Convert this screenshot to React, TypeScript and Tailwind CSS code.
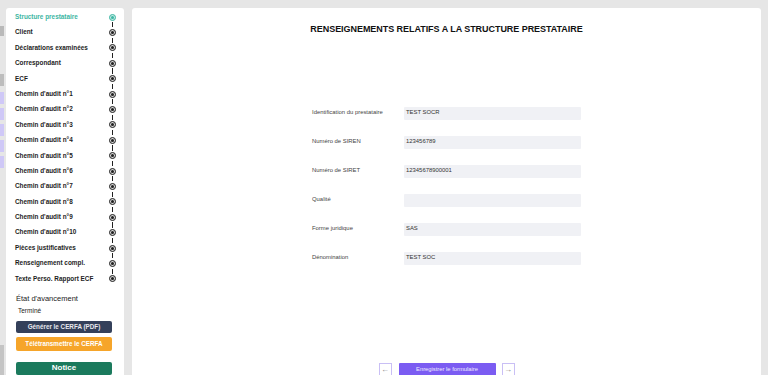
import React from "react";

const steps = [
  "Structure prestataire",
  "Client",
  "Déclarations examinées",
  "Correspondant",
  "ECF",
  "Chemin d'audit n°1",
  "Chemin d'audit n°2",
  "Chemin d'audit n°3",
  "Chemin d'audit n°4",
  "Chemin d'audit n°5",
  "Chemin d'audit n°6",
  "Chemin d'audit n°7",
  "Chemin d'audit n°8",
  "Chemin d'audit n°9",
  "Chemin d'audit n°10",
  "Pièces justificatives",
  "Renseignement compl.",
  "Texte Perso. Rapport ECF",
];

const fields = [
  { label: "Identification du prestataire", value: "TEST SOCR" },
  { label: "Numéro de SIREN", value: "123456789" },
  { label: "Numéro de SIRET", value: "12345678900001" },
  { label: "Qualité", value: "" },
  { label: "Forme juridique", value: "SAS" },
  { label: "Dénomination", value: "TEST SOC" },
];

function StepDot({ active }: { active: boolean }) {
  return (
    <div
      className={
        active
          ? "w-[7px] h-[7px] rounded-full border-[1.5px] border-[#3db6a3] bg-[#bfe9e1] flex items-center justify-center"
          : "w-[7px] h-[7px] rounded-full border-[1.5px] border-[#1f1f1f] bg-[#d4d4d4] flex items-center justify-center"
      }
    >
      <div className={active ? "w-[3px] h-[3px] rounded-full bg-[#3db6a3]" : "w-[3px] h-[3px] rounded-full bg-[#1f1f1f]"} />
    </div>
  );
}

export default function App() {
  return (
    <div className="w-full h-[375px] bg-[#e6e6e6] flex overflow-hidden font-['Liberation_Sans',Arial,sans-serif]">
      {/* left gutter (bits of page behind) */}
      <div className="w-[6px] flex flex-col">
        <div className="h-[26px]" />
        <div className="h-[10px] w-[4px] bg-[#b9b9b9]" />
        <div className="h-[38px]" />
        <div className="h-[12px] w-[4px] bg-[#bdbdbd]" />
        <div className="h-[6px]" />
        <div className="h-[12px] w-[4px] bg-[#cfc8f7]" />
        <div className="h-[4px]" />
        <div className="h-[12px] w-[4px] bg-[#cfc8f7]" />
        <div className="h-[4px]" />
        <div className="h-[12px] w-[4px] bg-[#cfc8f7]" />
        <div className="h-[4px]" />
        <div className="h-[12px] w-[4px] bg-[#cfc8f7]" />
        <div className="h-[4px]" />
        <div className="h-[12px] w-[4px] bg-[#cfc8f7]" />
        <div className="flex-1" />
        <div className="h-[30px] w-[4px] bg-[#c4c4c4]" />
      </div>

      {/* Sidebar */}
      <aside className="mt-[8px] w-[118px] bg-white rounded-t-[3px] flex flex-col">
        <nav className="flex flex-col pt-[1.5px] pl-[9px] pr-[8px]">
          {steps.map((s, i) => (
            <div key={s} className="h-[15.4px] flex items-stretch justify-between">
              <span
                className={
                  i === 0
                    ? "self-center text-[6.4px] leading-none font-bold text-[#3db6a3] whitespace-nowrap"
                    : "self-center text-[6.4px] leading-none font-bold text-[#1d1d1d] whitespace-nowrap"
                }
              >
                {s}
              </span>
              <div className="w-[7px] flex flex-col items-center">
                <div className="flex-1 flex items-start">
                  {i > 0 && <div className="w-px h-[2.6px] bg-[#222]" />}
                </div>
                <StepDot active={i === 0} />
                <div className="flex-1 flex items-end">
                  {i < steps.length - 1 && <div className="w-px h-[2.6px] bg-[#222]" />}
                </div>
              </div>
            </div>
          ))}
        </nav>

        <div className="pl-[10px] pr-[12px] mt-[7px] flex flex-col">
          <p className="text-[7.5px] leading-[10px] text-[#222]">État d'avancement</p>
          <p className="pl-[2px] mt-[2px] text-[6.5px] leading-[10px] text-[#222]">Terminé</p>
          <button className="mt-[5px] h-[12.5px] w-[96px] rounded-[2px] bg-[#34405a] text-[6.3px] leading-none text-[#e8e8ee] font-semibold">
            Générer le CERFA (PDF)
          </button>
          <button className="mt-[4px] h-[14px] w-[96px] rounded-[2px] bg-[#f6a52a] text-[6.3px] leading-none text-white font-semibold">
            Télétransmettre le CERFA
          </button>
          <button className="mt-[10.5px] h-[13px] w-[96px] rounded-[2px] bg-[#1b7a5d] text-[8px] leading-none text-white font-bold">
            Notice
          </button>
        </div>
      </aside>

      {/* Main card */}
      <main className="ml-[8px] mr-[7px] mt-[8px] flex-1 bg-white rounded-t-[3px] flex flex-col items-center">
        <h1 className="pt-[16px] text-[9px] leading-[10px] font-bold text-[#111] tracking-[-0.05px]">
          RENSEIGNEMENTS RELATIFS A LA STRUCTURE PRESTATAIRE
        </h1>

        <div className="mt-[73px] w-[269px] flex flex-col gap-[16.5px]">
          {fields.map((f) => (
            <div key={f.label} className="h-[12.5px] flex items-center">
              <span className="w-[92px] text-[5.9px] leading-none text-[#444] whitespace-nowrap">{f.label}</span>
              <div className="w-[177px] h-[12.5px] bg-[#f0f1f5] rounded-[1px] flex items-center pl-[2px]">
                <span className="text-[5.9px] leading-none text-[#333]">{f.value}</span>
              </div>
            </div>
          ))}
        </div>

        <div className="mt-[98.5px] flex items-center">
          <button className="w-[13px] h-[13px] border border-[#c9bff5] bg-white flex items-center justify-center text-[8px] leading-none text-[#888]">
            ←
          </button>
          <button className="ml-[7px] w-[97px] h-[13px] bg-[#7b5cf2] rounded-[1px] text-[5.8px] leading-none text-[#f0ecff]">
            Enregistrer le formulaire
          </button>
          <button className="ml-[6px] w-[13px] h-[13px] border border-[#c9bff5] bg-white flex items-center justify-center text-[8px] leading-none text-[#888]">
            →
          </button>
        </div>
      </main>
    </div>
  );
}
